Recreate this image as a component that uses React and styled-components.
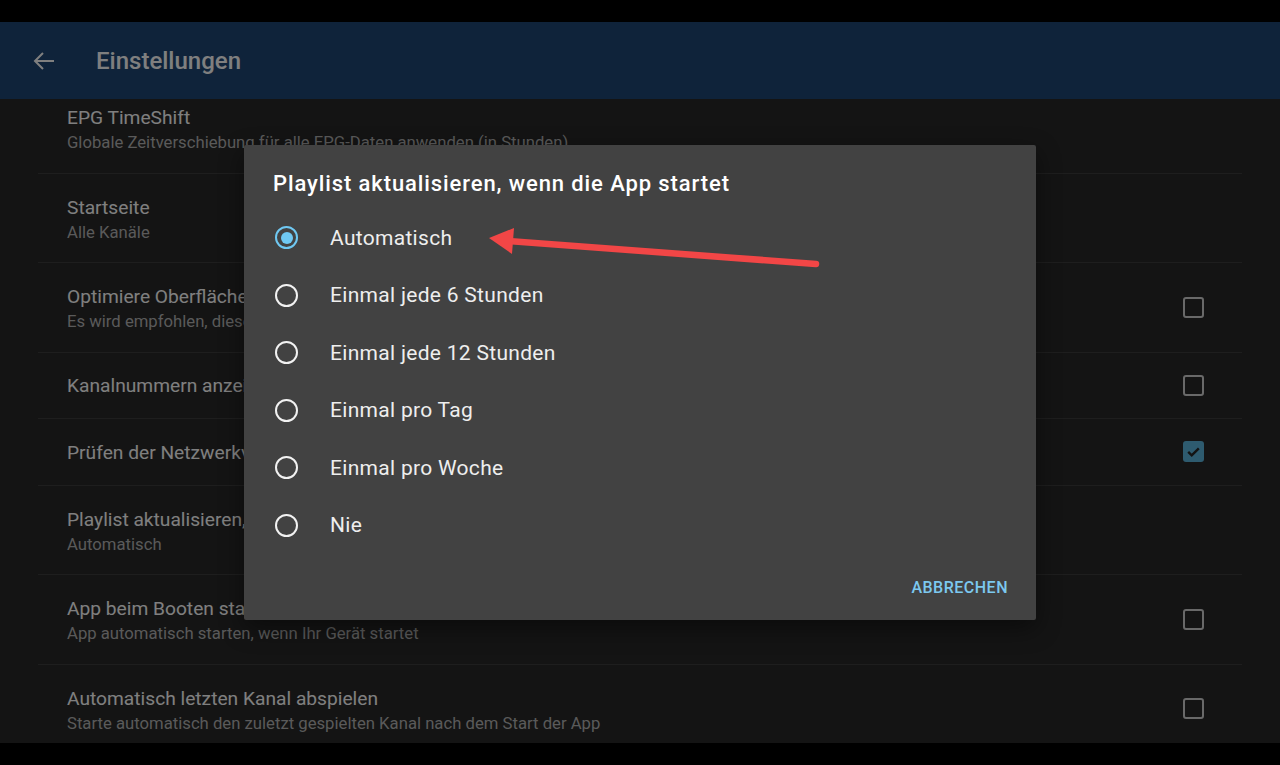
import React from "react";
import styled, { createGlobalStyle } from "styled-components";

const GlobalStyle = createGlobalStyle`
  html, body {
    margin: 0;
    padding: 0;
    background: #000;
    font-family: Roboto, "Liberation Sans", sans-serif;
  }
  * { box-sizing: border-box; }
`;

const settings = [
  {
    title: "EPG TimeShift",
    sub: "Globale Zeitverschiebung für alle EPG-Daten anwenden (in Stunden)",
  },
  { title: "Startseite", sub: "Alle Kanäle" },
  {
    title: "Optimiere Oberfläche für Fernseher",
    sub: "Es wird empfohlen, diese Option auf Android TV Geräten zu aktivieren",
    check: "off",
  },
  { title: "Kanalnummern anzeigen", check: "off" },
  { title: "Prüfen der Netzwerkverbindung beim Start", check: "on" },
  { title: "Playlist aktualisieren, wenn die App startet", sub: "Automatisch" },
  {
    title: "App beim Booten starten",
    sub: "App automatisch starten, wenn Ihr Gerät startet",
    check: "off",
  },
  {
    title: "Automatisch letzten Kanal abspielen",
    sub: "Starte automatisch den zuletzt gespielten Kanal nach dem Start der App",
    check: "off",
  },
];

const options = [
  "Automatisch",
  "Einmal jede 6 Stunden",
  "Einmal jede 12 Stunden",
  "Einmal pro Tag",
  "Einmal pro Woche",
  "Nie",
];

export default function App() {
  return (
    <>
      <GlobalStyle />
      <Screen>
        <Letterbox />
        <AppBar>
          <BackButton>
            <svg width="24" height="24" viewBox="0 0 24 24">
              <path
                fill="none"
                stroke="currentColor"
                strokeWidth="2"
                d="M22 12H3M11 4l-8 8 8 8"
              />
            </svg>
          </BackButton>
          <AppTitle>Einstellungen</AppTitle>
        </AppBar>
        <Content>
          <List>
            {settings.map((s) => (
              <Row key={s.title} $single={!s.sub}>
                <RowText $single={!s.sub}>
                  <RowTitle>{s.title}</RowTitle>
                  {s.sub && <RowSub>{s.sub}</RowSub>}
                </RowText>
                {s.check && (
                  <Checkbox $on={s.check === "on"}>
                    {s.check === "on" && (
                      <svg width="17" height="17" viewBox="0 0 24 24">
                        <path
                          fill="none"
                          stroke="#262626"
                          strokeWidth="3.4"
                          d="M4.5 12.5l5 5 10-10"
                        />
                      </svg>
                    )}
                  </Checkbox>
                )}
              </Row>
            ))}
          </List>
        </Content>
        <Letterbox />

        <Scrim>
          <Dialog>
            <DialogTitle>Playlist aktualisieren, wenn die App startet</DialogTitle>
            <Options>
              {options.map((o, i) => (
                <Option key={o}>
                  <Radio $on={i === 0} />
                  <OptionLabel>{o}</OptionLabel>
                </Option>
              ))}
            </Options>
            <Actions>
              <TextButton>Abbrechen</TextButton>
            </Actions>
          </Dialog>
        </Scrim>

        <Annotation width="1280" height="765" viewBox="0 0 1280 765">
          <line
            x1="816"
            y1="264"
            x2="508"
            y2="241"
            stroke="#f24646"
            strokeWidth="6.5"
            strokeLinecap="round"
          />
          <polygon points="489,238 514,228 512,254" fill="#f24646" />
        </Annotation>
      </Screen>
    </>
  );
}

const Screen = styled.div`
  position: relative;
  width: 1280px;
  height: 765px;
  display: flex;
  flex-direction: column;
  background: #000;
  overflow: hidden;
`;

const Letterbox = styled.div`
  height: 22px;
  flex: none;
  background: #000;
`;

const AppBar = styled.header`
  height: 77px;
  flex: none;
  display: flex;
  align-items: center;
  background: #1e4674;
  color: #ffffff;
`;

const BackButton = styled.div`
  width: 24px;
  height: 24px;
  margin-left: 32px;
  display: flex;
`;

const AppTitle = styled.h1`
  margin: 0 0 0 40px;
  font-size: 24px;
  font-weight: 500;
  letter-spacing: 0;
`;

const Content = styled.main`
  flex: 1;
  background: #282828;
  overflow: hidden;
`;

const List = styled.div`
  margin: -15px 38px 0;
`;

const Row = styled.div`
  display: flex;
  align-items: center;
  justify-content: space-between;
  height: ${(p) => (p.$single ? "66.5px" : "89.5px")};
  padding: 0 38px 0 29px;
  border-bottom: 1px solid #3c3c3c;
`;

const RowText = styled.div`
  display: flex;
  flex-direction: column;
  gap: 3px;
  margin-top: ${(p) => (p.$single ? "2px" : "5px")};
`;

const RowTitle = styled.div`
  font-size: 19.2px;
  line-height: 22px;
  color: #ffffff;
`;

const RowSub = styled.div`
  font-size: 16.7px;
  line-height: 22px;
  color: #b4b4b4;
`;

const Checkbox = styled.div`
  width: 21px;
  height: 21px;
  border-radius: 3px;
  display: flex;
  align-items: center;
  justify-content: center;
  border: ${(p) => (p.$on ? "none" : "2px solid #d2d2d2")};
  background: ${(p) => (p.$on ? "#5cb6de" : "transparent")};
`;

const Scrim = styled.div`
  position: absolute;
  inset: 0;
  background: rgba(0, 0, 0, 0.5);
  display: flex;
  align-items: center;
  justify-content: center;
`;

const Dialog = styled.div`
  width: 792px;
  background: #424242;
  border-radius: 2px;
  box-shadow: 0 8px 24px rgba(0, 0, 0, 0.45);
  padding: 26px 28px 15px 29px;
  display: flex;
  flex-direction: column;
`;

const DialogTitle = styled.h2`
  margin: 0;
  font-size: 22px;
  line-height: 26px;
  font-weight: 500;
  letter-spacing: 0.9px;
  color: #ffffff;
`;

const Options = styled.div`
  margin-top: 12px;
  display: flex;
  flex-direction: column;
`;

const Option = styled.div`
  height: 57.5px;
  display: flex;
  align-items: center;
  padding-left: 2px;
`;

const Radio = styled.span`
  width: 23px;
  height: 23px;
  flex: none;
  border-radius: 50%;
  border: 2.5px solid ${(p) => (p.$on ? "#6fc8f2" : "#f2f2f2")};
  display: flex;
  align-items: center;
  justify-content: center;
  &::after {
    content: "";
    width: 12px;
    height: 12px;
    border-radius: 50%;
    background: ${(p) => (p.$on ? "#6fc8f2" : "transparent")};
  }
`;

const OptionLabel = styled.span`
  margin-left: 32px;
  font-size: 21px;
  letter-spacing: 0.3px;
  color: #eeeeee;
`;

const Actions = styled.div`
  margin-top: 15px;
  display: flex;
  justify-content: flex-end;
`;

const TextButton = styled.button`
  height: 36px;
  border: none;
  background: none;
  padding: 0;
  font-family: inherit;
  font-size: 16px;
  font-weight: 500;
  letter-spacing: 0.5px;
  text-transform: uppercase;
  color: #7cc8ef;
`;

const Annotation = styled.svg`
  position: absolute;
  left: 0;
  top: 0;
  pointer-events: none;
`;
